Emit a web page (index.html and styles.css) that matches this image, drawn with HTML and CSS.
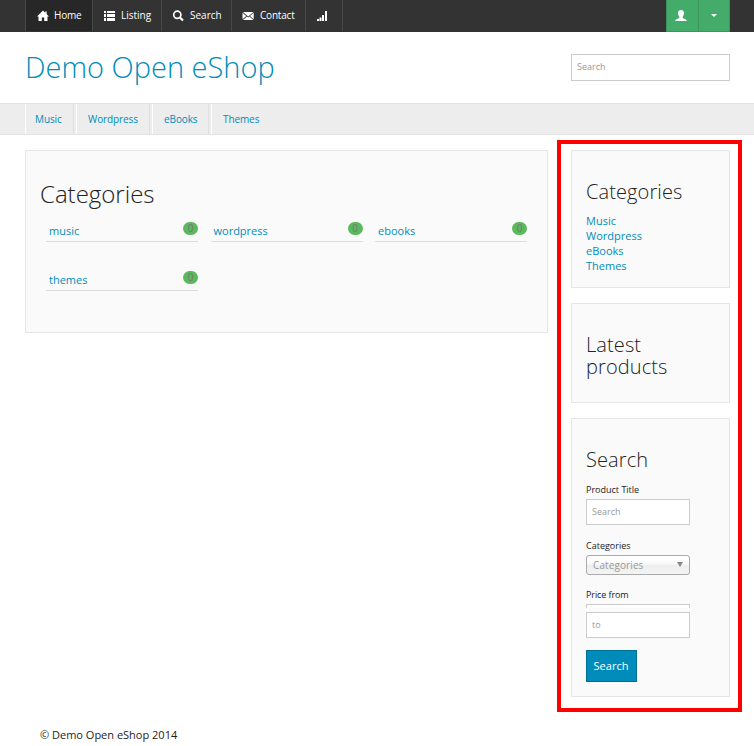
FILE: index.html
```html
<!DOCTYPE html>
<html lang="en">
<head>
<meta charset="utf-8">
<title>Demo Open eShop</title>
<link rel="stylesheet" href="styles.css">
</head>
<body>
<nav class="topbar">
  <a class="tab tab-home"><svg class="icon" viewBox="0 0 12 12"><path d="M6 .5 8.200 2.700V1.500h1.500v2.700L12 6.600h-1.500V11H7.200V7.600H4.800V11H1.500V6.600H0z"/></svg><span>Home</span></a>
  <a class="tab tab-listing"><svg class="icon" viewBox="0 0 12 12"><path d="M1 1h2v2H1zm3 0h8v2H4zM1 4h2v3H1zm3 0h8v3H4zM1 8h2v3H1zm3 0h8v3H4z"/></svg><span>Listing</span></a>
  <a class="tab tab-search"><svg class="icon" viewBox="0 0 12 12"><circle cx="5.300" cy="4.800" r="3.600" fill="none" stroke="#fff" stroke-width="1.700"/><path d="m8 7.500 3 3" stroke="#fff" stroke-width="2.200"/></svg><span>Search</span></a>
  <a class="tab tab-contact"><svg class="icon" viewBox="0 0 12 12"><path d="M1 2h10.500L6.200 6.500zM.5 2.700 4.300 6 .5 9.300zM11.700 2.700V9.300L8 6zM1 10l4-3.500 1.200 1 1.200-1 4.100 3.500z"/></svg><span>Contact</span></a>
  <a class="tab tab-stats"><svg class="icon" viewBox="0 0 12 12"><path d="M1 9h2v2H1zM3.500 7.500h2V11h-2zM6 5h2v6H6zM9 1h2v10H9z"/></svg></a>
  <div class="account">
    <a class="account-user"><svg class="icon" viewBox="0 0 12 12"><path d="M6 0c2 0 3.100 1.400 3 3.300-.1 1.700-.7 2.500-1.300 3.200v1.200c.2 1 4.100 1 4.100 3.300H.2c0-2.300 3.900-2.300 4.100-3.300V6.500C3.700 5.800 3.100 5 3 3.300 2.900 1.400 4 0 6 0z"/></svg></a>
    <a class="account-menu"><svg class="caret" viewBox="0 0 6 3"><path d="M0 0h6L3 3z"/></svg></a>
  </div>
</nav>
<header class="header">
  <h1 class="brand">Demo Open eShop</h1>
  <input class="field header-search" placeholder="Search">
</header>
<nav class="subnav">
  <a class="sub sub-music">Music</a>
  <a class="sub sub-wordpress">Wordpress</a>
  <a class="sub sub-ebooks">eBooks</a>
  <a class="sub sub-themes">Themes</a>
</nav>
<div class="page">
  <main class="panel main">
    <h2 class="main-title">Categories</h2>
    <ul class="cats">
      <li class="cat"><a>music</a><span class="badge">0</span></li>
      <li class="cat"><a>wordpress</a><span class="badge">0</span></li>
      <li class="cat"><a>ebooks</a><span class="badge">0</span></li>
      <li class="cat"><a>themes</a><span class="badge">0</span></li>
    </ul>
  </main>
  <aside class="sidebar">
    <section class="panel side side-cats">
      <h3>Categories</h3>
      <ul class="links"><li>Music</li><li>Wordpress</li><li>eBooks</li><li>Themes</li></ul>
    </section>
    <section class="panel side side-latest">
      <h3>Latest products</h3>
    </section>
    <section class="panel side side-search">
      <h3>Search</h3>
      <label class="label">Product Title</label>
      <input class="field" placeholder="Search">
      <label class="label label-cat">Categories</label>
      <div class="select"><span>Categories</span><svg class="arrow" viewBox="0 0 6 5"><path d="M0 0h6L3 5z"/></svg></div>
      <label class="label label-price">Price from</label>
      <div class="clipped"></div>
      <input class="field" placeholder="to">
      <button class="button">Search</button>
    </section>
  </aside>
</div>
<footer class="footer">© Demo Open eShop 2014</footer>
</body>
</html>
```
FILE: styles.css
```css
* { box-sizing: border-box; }
body {
  margin: 0;
  width: 754px;
  height: 746px;
  overflow: hidden;
  background: #fff;
  color: #222;
  font-family: "Open Sans", sans-serif;
  font-size: 11px;
}
h1, h2, h3 { margin: 0; font-weight: 300; }
ul { margin: 0; padding: 0; list-style: none; }
a, .links { color: #008cba; }

.topbar { display: flex; height: 32px; padding-left: 25px; background: #333; }
.tab {
  display: flex;
  align-items: center;
  height: 31px;
  padding-left: 10px;
  border-left: 1px solid #484848;
  color: #fff;
  font-size: 10px;
  line-height: 30px;
  white-space: nowrap;
}
.tab span { margin-left: 6px; height: 31px; }
.icon { width: 12px; height: 12px; fill: #fff; flex: none; }
.tab-home { width: 67px; padding-left: 11px; background: #272727; }
.tab-home span { margin-left: 5px; letter-spacing: -0.2px; }
.tab-listing { width: 69px; }
.tab-search { width: 70px; }
.tab-contact { width: 74px; letter-spacing: -0.2px; }
.tab-stats { width: 38px; border-right: 1px solid #484848; }
.account { display: flex; width: 64px; height: 32px; margin: 0 24px 0 auto; border: 1px solid #3a945b; border-top: 0; background: #43ac6a; }
.account a { display: flex; align-items: center; justify-content: center; }
.account-user { width: 31px; padding-right: 3px; }
.account-menu { flex: 1; border-left: 1px solid #3a945b; }
.caret { width: 6px; height: 3px; fill: #fff; }

.header { display: flex; justify-content: space-between; height: 71px; padding: 0 24px 0 25px; }
.brand { padding-top: 14px; color: #008cba; font-size: 29px; line-height: 42px; white-space: nowrap; }
.field {
  display: block;
  width: 104px;
  height: 26px;
  padding: 0 5px 2px;
  border: 1px solid #ccc;
  border-radius: 0;
  background: #fff;
  font: 9px "Open Sans", sans-serif;
}
.field::placeholder { color: #999; opacity: 1; }
.header-search { width: 159px; height: 27px; margin-top: 22px; }

.subnav { display: flex; height: 32px; padding-left: 25px; border: 1px solid #e2e2e2; border-width: 1px 0; background: #ededed; }
.sub { height: 30px; margin-right: 2px; padding-left: 9px; border-left: 1px solid #fff; border-right: 1px solid #e0e0e0; font-size: 10px; line-height: 31px; letter-spacing: -0.1px; white-space: nowrap; }
.sub-music { width: 49px; }
.sub-wordpress { width: 74px; padding-left: 11px; }
.sub-ebooks { width: 57px; padding-left: 11px; }
.sub-themes { border-right: 0; padding-left: 11px; }

.page { display: flex; align-items: flex-start; padding: 5px 12px 0 25px; }
.panel { border: 1px solid #e6e6e6; background: #fafafa; }
.main { width: 523px; height: 183px; margin-top: 10px; padding: 26px 0 0 14px; }
.main-title { font-size: 24px; line-height: 34px; }
.cats { display: grid; grid-template-columns: repeat(3, 152px); column-gap: 12.500px; row-gap: 27px; padding: 9px 0 0 6px; }
.cat { display: flex; justify-content: space-between; height: 22px; padding-left: 3px; border-bottom: 1px solid #ddd; line-height: 22px; }
.badge { width: 15px; height: 13px; margin-top: 2px; border-radius: 7px; background: #5cb85c; color: #777; font-size: 10px; line-height: 13px; text-align: center; }

.sidebar { width: 185px; height: 572px; margin-left: 9px; padding: 6px 8px 0 10px; border: 4px solid #f00; }
.side { width: 159px; margin-bottom: 15px; padding: 30px 14px 0; }
.side h3 { font-size: 20px; line-height: 22px; letter-spacing: 0.1px; }
.side-cats { height: 138px; }
.side-latest { height: 100px; }
.side-search { height: 279px; }
.links { padding-top: 10px; line-height: 15px; }
.label { display: block; height: 13px; margin: 12px 0 3px; font-size: 9px; line-height: 13px; color: #222; }
.label-cat { margin: 14px 0 3px; }
.label-price { margin: 13px 0 3px; letter-spacing: -0.1px; }
.select { display: flex; justify-content: space-between; width: 104px; height: 20px; padding: 0 6px; border: 1px solid #aaa; border-radius: 3px; background: linear-gradient(#fff 20%, #f6f6f6 50%, #eee 52%, #f4f4f4); color: #999; font-size: 10px; line-height: 19px; letter-spacing: 0.1px; }
.arrow { width: 6px; height: 5px; margin-top: 6px; fill: #888; }
.clipped { width: 104px; height: 4px; margin-bottom: 4px; border: 1px solid #ccc; border-bottom: 0; background: #fff; }
.button { display: block; width: 51px; height: 32px; margin-top: 12px; padding: 0 1px 2px 0; border: 1px solid #007095; background: #008cba; color: #fff; font: 11px "Open Sans", sans-serif; }
.footer { padding: 15px 0 0 40px; line-height: 16px; }
```
